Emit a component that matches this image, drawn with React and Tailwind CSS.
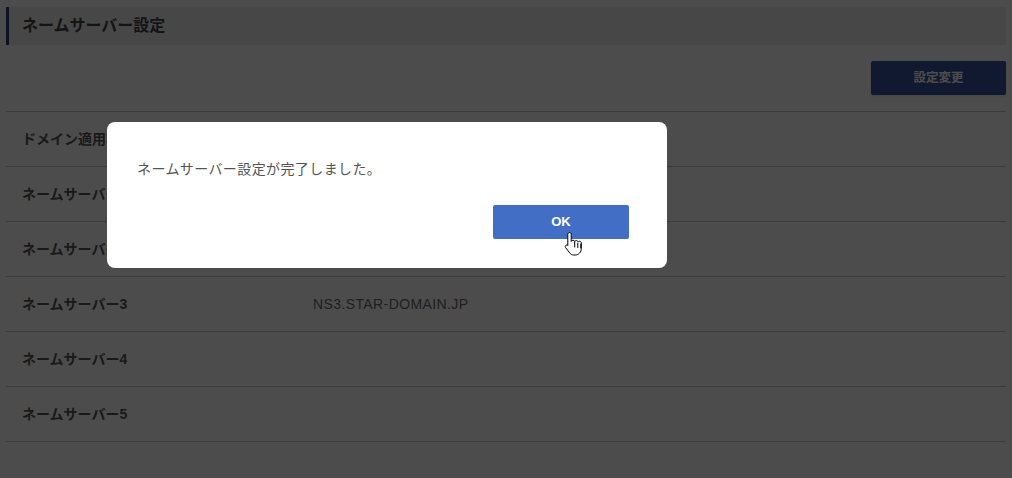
import React from 'react';

const rows = [
  { label: 'ドメイン適用状態', value: '適用済み' },
  { label: 'ネームサーバー1', value: 'NS1.STAR-DOMAIN.JP' },
  { label: 'ネームサーバー2', value: 'NS2.STAR-DOMAIN.JP' },
  { label: 'ネームサーバー3', value: 'NS3.STAR-DOMAIN.JP' },
  { label: 'ネームサーバー4', value: '' },
  { label: 'ネームサーバー5', value: '' },
];

function HandCursor() {
  return (
    <svg width="20" height="26" viewBox="0 0 20 26" className="absolute left-[564px] top-[231px]">
      <path
        d="M5.5 1.5c1 0 1.7.7 1.7 1.7v7.3c.3-.9 1-1.3 1.8-1.3.9 0 1.6.6 1.7 1.4.3-.7.9-1.1 1.7-1.1.9 0 1.6.7 1.7 1.5.3-.5.8-.8 1.5-.8 1 0 1.7.8 1.7 1.8v5.5c0 3.7-2.6 6.5-6 6.5H9.8c-1.7 0-3-.7-4.1-2.1L1.6 16.6c-.6-.8-.4-1.8.3-2.3.7-.5 1.6-.3 2.2.3l-.3-.3V3.2c0-1 .7-1.7 1.7-1.7z"
        fill="#fff"
        stroke="#000"
        strokeWidth="1"
        strokeLinejoin="round"
      />
      <path d="M10.7 11v5M13.8 12v4.5M16.8 13v4" stroke="#000" strokeWidth="1" strokeLinecap="round" />
    </svg>
  );
}

export default function App() {
  return (
    <div
      className="relative w-[1012px] h-[478px] overflow-hidden bg-white"
      style={{ fontFamily: '"Liberation Sans", "Noto Sans CJK JP", sans-serif' }}
    >
      {/* Page content */}
      <div className="px-[6px] pt-[7px]">
        <div className="h-[38px] flex items-center bg-[#efefef] border-l-[3px] border-[#2c3f73] pl-[13px]">
          <h2 className="text-[16px] font-bold text-[#444]">ネームサーバー設定</h2>
        </div>

        <div className="flex justify-end mt-[16px] mb-[16px]">
          <button className="w-[135px] h-[34px] bg-[#3a56a0] rounded-[2px] text-white text-[12.5px] font-bold shadow-sm">
            設定変更
          </button>
        </div>

        <div className="border-t border-[#c8c8c8]">
          {rows.map(row => (
            <div key={row.label} className="h-[55px] flex items-center border-b border-[#c8c8c8] pl-[16px]">
              <div className="w-[291px] text-[14px] font-bold text-[#555] whitespace-nowrap">{row.label}</div>
              <div className="text-[14px] tracking-[0.4px] text-[#6a6a6a]">{row.value}</div>
            </div>
          ))}
        </div>
      </div>

      {/* Overlay */}
      <div className="absolute inset-0 bg-black/70" />

      {/* Dialog */}
      <div className="absolute left-[107px] top-[122px] w-[560px] h-[146px] bg-white rounded-[8px] pl-[30px] pr-[38px] pt-[37px]">
        <p className="text-[14px] tracking-[0.4px] text-[#555]">ネームサーバー設定が完了しました。</p>
        <div className="flex justify-end mt-[25px]">
          <button className="w-[136px] h-[34px] bg-[#426fc5] rounded-[2px] text-white text-[13px] font-bold">
            OK
          </button>
        </div>
      </div>

      <HandCursor />
    </div>
  );
}
